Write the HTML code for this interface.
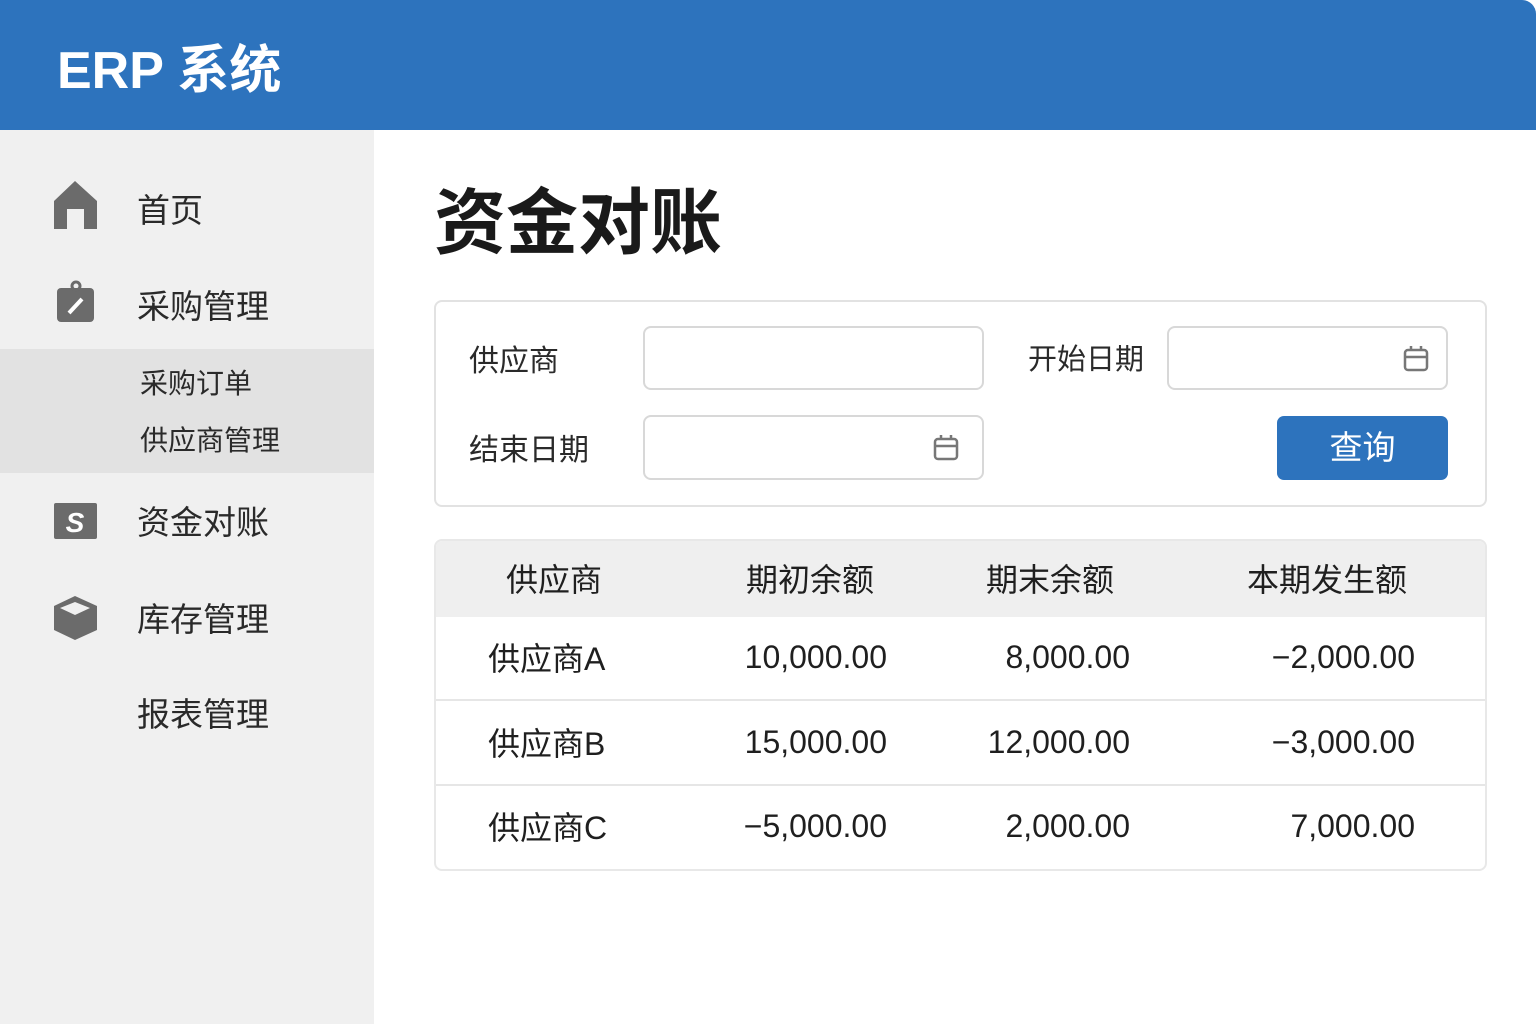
<!DOCTYPE html>
<html><head><meta charset="utf-8"><style>
*{margin:0;padding:0;box-sizing:border-box}
body{width:1536px;height:1024px;overflow:hidden;background:#fff;font-family:"Liberation Sans","Noto Sans CJK SC",sans-serif;color:#222;position:relative}
.hdr{position:absolute;left:0;top:0;width:1536px;height:130px;background:#2d73bd;border-radius:0 14px 0 0}
.hdr h1{position:absolute;left:57px;top:28px;font-size:52px;color:#fff;font-weight:bold;letter-spacing:0px}
.side{position:absolute;left:0;top:130px;width:374px;height:894px;background:#f0f0f0}
.sub{position:absolute;left:0;top:219px;width:374px;height:124px;background:#e2e2e2}
.t{position:absolute;font-size:33px;color:#2a2a2a}
.s{position:absolute;font-size:28px;color:#2a2a2a}
.ic{position:absolute}
.main h2{position:absolute;left:434px;top:164px;font-size:72px;font-weight:bold;color:#1a1a1a}
.box{position:absolute;left:434px;top:300px;width:1053px;height:207px;border:2px solid #e2e2e2;border-radius:8px}
.lab{position:absolute;font-size:30px;color:#2a2a2a}
.inp{position:absolute;border:2px solid #d8d8d8;border-radius:8px;background:#fff}
.btn{position:absolute;left:1277px;top:416px;width:171px;height:64px;background:#2d73bd;border-radius:7px;color:#fff;font-size:33px;text-align:center;line-height:64px}
.tbl{position:absolute;left:434px;top:539px;width:1053px;height:332px;border:2px solid #e8e8e8;border-radius:8px;overflow:hidden}
.th{position:absolute;left:0;top:0;width:100%;height:76px;background:#efefef}
.c{position:absolute;font-size:32px;color:#1f1f1f;white-space:nowrap}
.line{position:absolute;left:0;width:100%;height:2px;background:#e6e6e6}
</style></head><body>
<div class="hdr"><h1>ERP 系统</h1></div>
<div class="side">
<div class="sub"></div>
<svg class="ic" style="left:54px;top:51px" width="43" height="48" viewBox="0 0 43 48"><path d="M21 0 L43 20 V48 H30 V28 H13 V48 H0 V20 Z" fill="#6b6b6b"/></svg>
<div class="t" style="left:137px;top:54px">首页</div>
<svg class="ic" style="left:57px;top:150px" width="38" height="42" viewBox="0 0 38 42"><rect x="0" y="8" width="37" height="34" rx="4" fill="#6b6b6b"/><circle cx="19" cy="6" r="4" fill="none" stroke="#6b6b6b" stroke-width="3"/><path d="M12 33 L25 19" stroke="#fff" stroke-width="4"/></svg>
<div class="t" style="left:137px;top:150px">采购管理</div>
<div class="s" style="left:140px;top:232px">采购订单</div>
<div class="s" style="left:140px;top:289px">供应商管理</div>
<svg class="ic" style="left:54px;top:373px" width="43" height="36" viewBox="0 0 43 36"><rect width="43" height="36" rx="2" fill="#6b6b6b"/><text x="21" y="29" font-size="28" font-weight="bold" fill="#fff" text-anchor="middle" font-family="Liberation Sans" font-style="italic">S</text></svg>
<div class="t" style="left:137px;top:366px">资金对账</div>
<svg class="ic" style="left:54px;top:466px" width="43" height="44" viewBox="0 0 43 44"><path d="M21 0 L43 10 V34 L21 44 L0 34 V10 Z" fill="#6b6b6b"/><path d="M21 6 L36 12 L21 19 L6 12 Z" fill="#f0f0f0"/></svg>
<div class="t" style="left:137px;top:463px">库存管理</div>
<div class="t" style="left:137px;top:558px">报表管理</div>
</div>
<div class="main">
<h2>资金对账</h2>
<div class="box"></div>
<div class="lab" style="left:469px;top:336px">供应商</div>
<div class="inp" style="left:643px;top:326px;width:341px;height:64px"></div>
<div class="lab" style="left:1028px;top:336px;font-size:29px">开始日期</div>
<div class="inp" style="left:1167px;top:326px;width:281px;height:64px"></div>
<svg class="ic" style="left:1403px;top:345px" width="26" height="27" viewBox="0 0 26 27"><rect x="2" y="5" width="22" height="20" rx="3" fill="none" stroke="#777" stroke-width="2.5"/><path d="M2 12 H24 M8 1 V6 M18 1 V6" stroke="#777" stroke-width="2.5"/></svg>
<div class="lab" style="left:469px;top:425px">结束日期</div>
<div class="inp" style="left:643px;top:415px;width:341px;height:65px"></div>
<svg class="ic" style="left:933px;top:434px" width="26" height="27" viewBox="0 0 26 27"><rect x="2" y="5" width="22" height="20" rx="3" fill="none" stroke="#777" stroke-width="2.5"/><path d="M2 12 H24 M8 1 V6 M18 1 V6" stroke="#777" stroke-width="2.5"/></svg>
<div class="btn">查询</div>
<div class="tbl">
<div class="th"></div>
<div class="c" style="left:70px;top:14px">供应商</div>
<div class="c" style="left:310px;top:14px">期初余额</div>
<div class="c" style="left:550px;top:14px">期末余额</div>
<div class="c" style="left:811px;top:14px">本期发生额</div>
<div class="line" style="top:158px"></div>
<div class="line" style="top:243px"></div>
<div class="c" style="left:52px;top:93px">供应商A</div>
<div class="c" style="right:598px;top:98px">10,000.00</div>
<div class="c" style="right:355px;top:98px">8,000.00</div>
<div class="c" style="right:70px;top:98px">−2,000.00</div>
<div class="c" style="left:52px;top:178px">供应商B</div>
<div class="c" style="right:598px;top:183px">15,000.00</div>
<div class="c" style="right:355px;top:183px">12,000.00</div>
<div class="c" style="right:70px;top:183px">−3,000.00</div>
<div class="c" style="left:52px;top:262px">供应商C</div>
<div class="c" style="right:598px;top:267px">−5,000.00</div>
<div class="c" style="right:355px;top:267px">2,000.00</div>
<div class="c" style="right:70px;top:267px">7,000.00</div>
</div>
</div>
</body></html>
